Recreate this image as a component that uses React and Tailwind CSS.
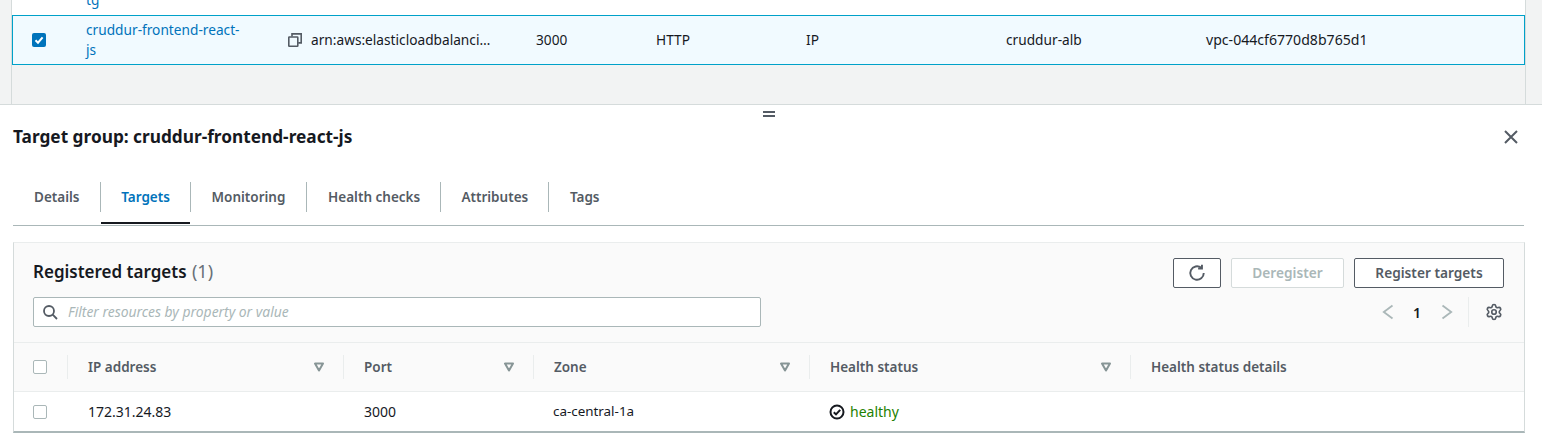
import React from "react";
import { Settings } from "lucide-react";

const F = "font-['Noto_Sans',sans-serif]";

function Sort() {
  return (
    <svg width="12" height="12" viewBox="0 0 12 12" className="shrink-0">
      <path d="M2 2.5h8L6 9.5z" fill="none" stroke="#879596" strokeWidth="2" strokeLinejoin="round" />
    </svg>
  );
}

function Box() {
  return <div className="h-[14px] w-[14px] rounded-[2px] border border-[#aab7b8] bg-white" />;
}

function Head({ w, label, sort = true }) {
  return (
    <div className={`flex h-[24px] items-center justify-between border-l border-[#eaeded] pl-[20px] pr-[18px] ${w}`}>
      <span className="text-[13.5px] font-semibold text-[#545b64]">{label}</span>
      {sort && <Sort />}
    </div>
  );
}

const tabs = [
  { t: "Details", c: "pl-[21px] pr-[20.7px] text-[#545b64]" },
  { t: "Targets", c: "pl-[20px] pr-[19.7px] text-[#0073bb] border-l border-[#aab7b8]" },
  { t: "Monitoring", c: "pl-[21px] pr-[20.7px] text-[#545b64] border-l border-[#aab7b8]" },
  { t: "Health checks", c: "pl-[21px] pr-[19.7px] text-[#545b64] border-l border-[#aab7b8]" },
  { t: "Attributes", c: "pl-[20.5px] pr-[19.7px] text-[#545b64] border-l border-[#aab7b8]" },
  { t: "Tags", c: "pl-[21px] pr-[19.7px] text-[#545b64] border-l border-[#aab7b8]" },
];

export default function App() {
  return (
    <div className={`${F} h-[438px] w-[1542px] overflow-hidden bg-white text-[13.7px] text-[#16191f]`}>
      {/* upper table */}
      <div className="h-[105px] border-b border-[#d5dbdb] bg-[#f2f3f3] pl-[11px] pr-[16px]">
        <div className="h-full border-x border-[#d5dbdb]">
          <div className="relative h-[15px] overflow-hidden bg-white">
            <span className="absolute left-[74px] top-[-10px] leading-[20px] text-[#0073bb]">tg</span>
          </div>
          <div className="grid h-[50px] grid-cols-[73px_200px_250px_120px_150px_200px_200px_1fr] items-center border border-[#00a1c9] bg-[#f1faff]">
            <div className="pl-[19px]">
              <div className="flex h-[14px] w-[14px] items-center justify-center rounded-[2px] bg-[#0073bb]">
                <svg width="10" height="10" viewBox="0 0 10 10">
                  <path d="M1.5 5.2 4 7.7 8.6 2.3" fill="none" stroke="#fff" strokeWidth="2" />
                </svg>
              </div>
            </div>
            <div className="w-[160px] leading-[20px] text-[#0073bb]">cruddur-frontend-react-js</div>
            <div className="flex items-center gap-[9px] pl-[2px]">
              <svg width="14" height="14" viewBox="0 0 14 14" fill="none" stroke="#545b64" strokeWidth="1.6">
                <rect x="0.8" y="4" width="9" height="9.2" rx="0.5" />
                <path d="M4 3.6V0.9h9.2v9H10.2" />
              </svg>
              <span className="w-[181px] truncate">arn:aws:elasticloadbalancing:ca-central-1</span>
            </div>
            <div>3000</div>
            <div>HTTP</div>
            <div>IP</div>
            <div>cruddur-alb</div>
            <div className="text-[14.1px]">vpc-044cf6770d8b765d1</div>
          </div>
        </div>
      </div>

      {/* split panel */}
      <div className="relative px-[13px]">
        <div className="absolute left-[763px] top-[6px] h-[6px] w-[12px] border-y-2 border-[#545b64]" />
        <div className="flex h-[54px] items-center justify-between pr-[10px] pt-[10px]">
          <h2 className="text-[17.25px] font-bold leading-[22px]">Target group: cruddur-frontend-react-js</h2>
          <svg width="16" height="16" viewBox="0 0 16 16" fill="none" stroke="#545b64" strokeWidth="2">
            <path d="M2 2l12 12M14 2 2 14" />
          </svg>
        </div>

        {/* tabs */}
        <div className="flex h-[67px] w-[1511px] items-center border-b border-[#aab7b8] pt-[10px]">
          {tabs.map(({ t, c }) => (
            <div key={t} className={`relative flex h-[30px] items-center text-[13.5px] font-semibold ${c}`}>
              {t}
              {t === "Targets" && <div className="absolute inset-x-0 top-[40px] h-[2px] bg-[#16191f]" />}
            </div>
          ))}
        </div>

        {/* container */}
        <div className="mt-[16px] w-[1512px] border border-t-[#eaeded] border-x-[#d5dbdb] border-b-[#aab7b8] border-b-2">
          <div className="h-[100px] border-b border-[#eaeded] bg-[#fafafa] pl-[19px] pr-[20px] pt-[14px]">
            <div className="flex h-[32px] items-center justify-between">
              <div className="pb-[4px] text-[17px] font-semibold leading-[22px]">
                Registered targets <span className="ml-[1px] text-[18px] font-normal text-[#687078]">(1)</span>
              </div>
              <div className="flex gap-[10px]">
                <div className="flex h-[30px] w-[48px] items-center justify-center rounded-[2px] border border-[#545b64] bg-white">
                  <svg width="18" height="18" viewBox="0 0 16 16" fill="none" stroke="#545b64" strokeWidth="1.7">
                    <path d="M14 8a6 6 0 1 1-2.2-4.6" />
                    <path d="M12.4 0.6v3.4H9" />
                  </svg>
                </div>
                <div className="flex h-[30px] w-[113px] items-center justify-center rounded-[2px] border border-[#d5dbdb] bg-white font-semibold text-[#aab7b8]">Deregister</div>
                <div className="flex h-[30px] w-[150px] items-center justify-center rounded-[2px] border border-[#545b64] bg-white font-semibold text-[#545b64]">Register targets</div>
              </div>
            </div>
            <div className="mt-[8px] flex h-[30px] items-center justify-between">
              <div className="flex h-[30px] w-[728px] items-center gap-[10px] rounded-[2px] border border-[#aab7b8] bg-white pl-[8px]">
                <svg width="16" height="16" viewBox="0 0 16 16" fill="none" stroke="#545b64" strokeWidth="1.8">
                  <circle cx="7" cy="7" r="5" />
                  <path d="M10.7 10.7 15 15" />
                </svg>
                <span className="text-[13.9px] italic text-[#aab7b8]">Filter resources by property or value</span>
              </div>
              <div className="mr-[1px] flex items-center">
                <svg width="14" height="16" viewBox="0 0 14 16" fill="none" stroke="#aab7b8" strokeWidth="1.8">
                  <path d="M11.5 1.5 2.8 8l8.7 6.5" />
                </svg>
                <span className="ml-[18px] text-[14px] font-semibold">1</span>
                <svg className="ml-[19px]" width="14" height="16" viewBox="0 0 14 16" fill="none" stroke="#aab7b8" strokeWidth="1.8">
                  <path d="M2.5 1.5 11.2 8l-8.7 6.5" />
                </svg>
                <div className="ml-[14px] h-[30px] border-l border-[#eaeded]" />
                <Settings className="ml-[16px]" size={18} color="#545b64" strokeWidth={2.2} />
              </div>
            </div>
          </div>

          <div className="flex h-[49px] items-center border-b border-[#eaeded] bg-[#fafafa]">
            <div className="w-[53px] pl-[19px]"><Box /></div>
            <Head w="w-[276px]" label="IP address" />
            <Head w="w-[190px]" label="Port" />
            <Head w="w-[276px]" label="Zone" />
            <Head w="w-[321px]" label="Health status" />
            <Head w="flex-1" label="Health status details" sort={false} />
          </div>

          <div className="flex h-[39px] items-center bg-white">
            <div className="w-[53px] pl-[19px]"><Box /></div>
            <div className="w-[276px] pl-[21px] text-[14px]">172.31.24.83</div>
            <div className="w-[190px] pl-[21px] text-[14px]">3000</div>
            <div className="w-[276px] pl-[20px] text-[13.4px]">ca-central-1a</div>
            <div className="flex items-center gap-[5px] pl-[20px]">
              <svg width="16" height="16" viewBox="0 0 16 16" fill="none" stroke="#16191f" strokeWidth="2">
                <circle cx="8" cy="8" r="6.5" />
                <path d="M4.8 8.2 7 10.4 11.2 5.8" />
              </svg>
              <span className="text-[14px] text-[#1d8102]">healthy</span>
            </div>
          </div>
        </div>
      </div>
    </div>
  );
}
